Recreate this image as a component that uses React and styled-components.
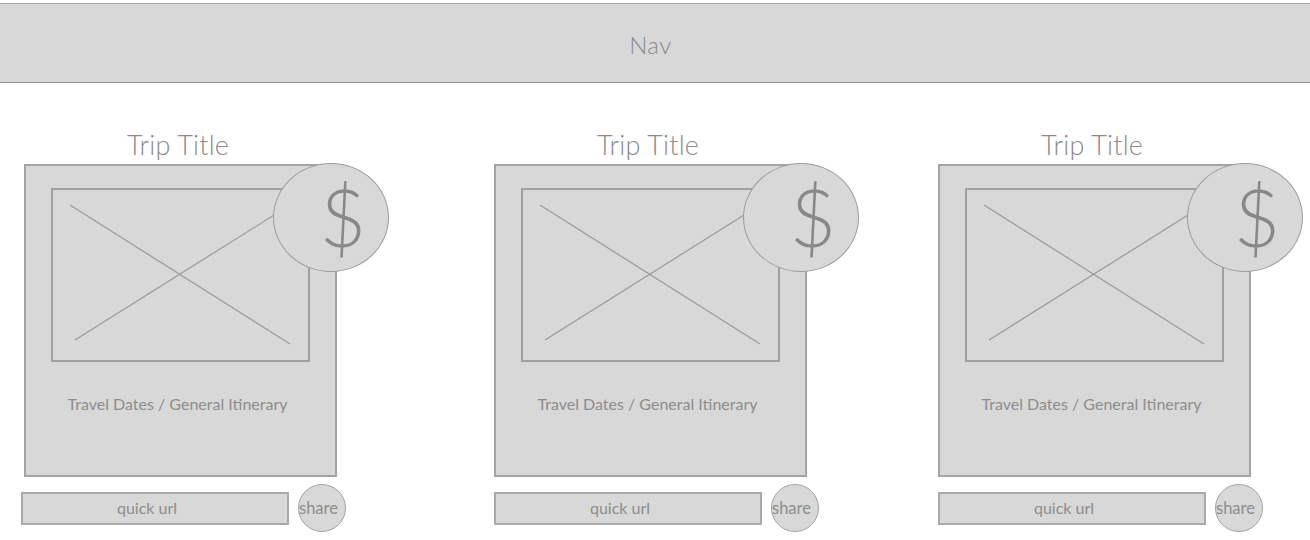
import React from "react";
import styled, { createGlobalStyle } from "styled-components";

const Global = createGlobalStyle`
  html, body { margin: 0; padding: 0; background: #ffffff; }
  body { font-family: "Lato", "Open Sans", sans-serif; font-weight: 400; color: #8d8d8d; }
  * { box-sizing: border-box; }
`;

const Page = styled.div`
  width: 1310px;
  height: 540px;
  padding-top: 3px;
  overflow: hidden;
`;

const Nav = styled.header`
  height: 80px;
  background: #d8d8d8;
  border-top: 1px solid #a9a9a9;
  border-bottom: 1px solid #9a9a9a;
  display: flex;
  align-items: center;
  justify-content: center;
  font-size: 24px;
  font-weight: 300;
  color: #8a8a8a;
  padding-top: 2px;
  padding-right: 9px;
  letter-spacing: 0.5px;
`;

const Row = styled.main`
  display: flex;
  align-items: flex-start;
  padding-top: 46px;
`;

const Column = styled.section`
  width: 312px;
  flex-shrink: 0;
  margin-left: ${(p) => p.$offset}px;
  display: flex;
  flex-direction: column;
`;

const Title = styled.h2`
  margin: 0 0 4px;
  font-size: 27px;
  line-height: 31px;
  font-weight: 300;
  text-align: center;
  color: #8a8a8a;
  padding-right: 4px;
  letter-spacing: 0.2px;
`;

const CardBox = styled.div`
  position: relative;
  width: 313px;
  height: 313px;
  background: #d8d8d8;
  border: 2px solid #a4a4a4;
  display: flex;
  flex-direction: column;
  align-items: center;
  padding-top: 22px;
`;

const ImageBox = styled.div`
  width: 259px;
  height: 174px;
  border: 2px solid #a0a0a0;
  background: #d8d8d8;
  display: flex;
`;

const Cross = styled.svg`
  display: block;
  width: 100%;
  height: 100%;
`;

const Price = styled.div`
  position: absolute;
  left: 247px;
  top: -3px;
  width: 116px;
  height: 109px;
  border-radius: 50%;
  border: 1px solid #9c9c9c;
  background: #d8d8d8;
  display: flex;
  align-items: center;
  justify-content: center;
  padding-left: 24px;
  padding-bottom: 4px;
  font-size: 80px;
  line-height: 1;
  font-weight: 300;
  color: #888888;
`;

const Details = styled.p`
  margin: 32px 0 0;
  font-size: 16px;
  line-height: 19px;
  color: #8d8d8d;
  text-align: center;
  padding-right: 6px;
`;

const ShareRow = styled.div`
  display: flex;
  align-items: center;
  gap: 9px;
  margin-top: 7px;
  margin-left: ${(p) => p.$shift}px;
`;

const UrlField = styled.div`
  width: 268px;
  flex-shrink: 0;
  height: 33px;
  border: 2px solid #a9a9a9;
  background: #d8d8d8;
  display: flex;
  align-items: center;
  justify-content: center;
  padding-right: 16px;
  padding-bottom: 2px;
  font-size: 16px;
  color: #8d8d8d;
`;

const ShareButton = styled.button`
  width: 48px;
  height: 48px;
  flex-shrink: 0;
  border-radius: 50%;
  border: 1px solid #a2a2a2;
  background: #d8d8d8;
  display: flex;
  align-items: center;
  justify-content: flex-start;
  padding: 0 0 1px;
  font-family: "Lato", "Open Sans", sans-serif;
  font-weight: 400;
  font-size: 16.5px;
  color: #8d8d8d;
  overflow: visible;
  white-space: nowrap;
`;

const trips = [
  { id: 1, offset: 24, shift: -3 },
  { id: 2, offset: 158, shift: 0 },
  { id: 3, offset: 132, shift: 0 },
];

function TripCard({ offset, shift }) {
  return (
    <Column $offset={offset}>
      <Title>Trip Title</Title>
      <CardBox>
        <ImageBox>
          <Cross viewBox="0 0 255 170" preserveAspectRatio="none">
            <line x1="17" y1="15" x2="237" y2="154" stroke="#9a9a9a" strokeWidth="1.2" />
            <line x1="22" y1="150" x2="237" y2="15" stroke="#9a9a9a" strokeWidth="1.2" />
          </Cross>
        </ImageBox>
        <Price>$</Price>
        <Details>Travel Dates / General Itinerary</Details>
      </CardBox>
      <ShareRow $shift={shift}>
        <UrlField>quick url</UrlField>
        <ShareButton>share</ShareButton>
      </ShareRow>
    </Column>
  );
}

export default function App() {
  return (
    <Page>
      <Global />
      <Nav>Nav</Nav>
      <Row>
        {trips.map((t) => (
          <TripCard key={t.id} offset={t.offset} shift={t.shift} />
        ))}
      </Row>
    </Page>
  );
}
